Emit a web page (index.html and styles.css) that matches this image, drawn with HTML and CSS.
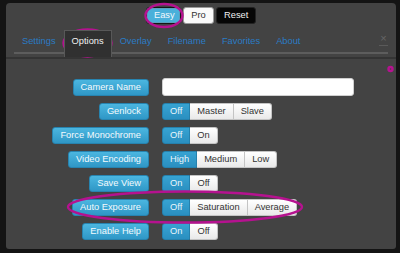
FILE: index.html
```html
<!DOCTYPE html>
<html>
<head>
<meta charset="utf-8">
<link rel="stylesheet" href="styles.css">
</head>
<body>
<div class="panel">
  <div class="modes">
    <span class="mode mode-easy">Easy</span>
    <span class="mode mode-pro">Pro</span>
    <span class="mode mode-reset">Reset</span>
  </div>
  <div class="tabs">
    <span class="tab">Settings</span>
    <span class="tab tab-active">Options</span>
    <span class="tab">Overlay</span>
    <span class="tab">Filename</span>
    <span class="tab">Favorites</span>
    <span class="tab">About</span>
    <span class="close">×</span>
  </div>
  <div class="sep"></div>
  <div class="form">
    <span class="label">Camera Name</span>
    <span class="field"><span class="input"></span></span>

    <span class="label">Genlock</span>
    <span class="seg"><span class="opt on">Off</span><span class="opt">Master</span><span class="opt">Slave</span></span>

    <span class="label">Force Monochrome</span>
    <span class="seg"><span class="opt on">Off</span><span class="opt">On</span></span>

    <span class="label">Video Encoding</span>
    <span class="seg"><span class="opt on">High</span><span class="opt">Medium</span><span class="opt">Low</span></span>

    <span class="label">Save View</span>
    <span class="seg"><span class="opt on">On</span><span class="opt">Off</span></span>

    <span class="label">Auto Exposure</span>
    <span class="seg"><span class="opt on">Off</span><span class="opt">Saturation</span><span class="opt">Average</span></span>

    <span class="label">Enable Help</span>
    <span class="seg"><span class="opt on">On</span><span class="opt">Off</span></span>
  </div>
</div>
<svg class="annot" width="400" height="253" viewBox="0 0 400 253">
  <ellipse cx="164" cy="15.5" rx="18.5" ry="11.5"/>
  <ellipse cx="87.5" cy="43" rx="24" ry="13.5"/>
  <ellipse cx="185" cy="207" rx="117" ry="15.5"/>
  <circle cx="390.5" cy="69" r="2"/>
</svg>
</body>
</html>
```
FILE: styles.css
```css
html, body {
  margin: 0;
  padding: 0;
}
body {
  width: 400px;
  height: 253px;
  overflow: hidden;
  position: relative;
  background: #141414;
  font-family: "Liberation Sans", Arial, sans-serif;
  font-size: 9.3px;
}
.panel {
  margin: 3px 0 0 6px;
  width: 390px;
  height: 246px;
  background: #434343;
  border-radius: 4px 4px 3px 3px;
  box-sizing: border-box;
  display: flex;
  flex-direction: column;
}
.modes {
  display: flex;
  justify-content: center;
  gap: 2px;
  padding-top: 4px;
}
.mode {
  height: 17px;
  box-sizing: border-box;
  line-height: 15px;
  padding: 0 7px;
  border-radius: 3px;
  border: 1px solid transparent;
  text-align: center;
}
.mode-easy {
  width: 35px;
  background: #4ab0da;
  color: #f2f8fc;
  border-color: #161616;
  box-shadow: inset 0 0 0 1px #5aa0bd;
}
.mode-pro {
  width: 31px;
  background: #fafafa;
  color: #333;
  border-color: #9a9a9a;
}
.mode-reset {
  width: 40px;
  background: #060606;
  color: #f0f0f0;
  border-color: #222;
}
.tabs {
  display: flex;
  align-items: flex-start;
  margin: 6px 8px 0;
  border-bottom: 2px solid #5d5d5d;
  position: relative;
}
.tab {
  height: 22px;
  line-height: 22px;
  padding: 0 8px;
  color: #2a7bc4;
  box-sizing: border-box;
}
.tab-active {
  height: 27px;
  margin-bottom: -5px;
  background: #303030;
  color: #f0f0f0;
  border: 1px solid #585858;
  border-bottom: none;
  line-height: 21px;
  padding: 0 7px;
  position: relative;
  z-index: 1;
}
.close {
  margin-left: auto;
  margin-right: 0;
  margin-top: 3px;
  width: 9px;
  text-align: center;
  color: #666;
  font-size: 11px;
  line-height: 11px;
  height: 13px;
  border-bottom: 1px solid #5a5a5a;
  box-sizing: border-box;
}
.sep {
  margin-top: 3px;
  height: 2px;
  background: #343434;
}
.form {
  display: grid;
  grid-template-columns: 143px 1fr;
  column-gap: 13px;
  row-gap: 7px;
  padding-top: 19px;
  align-items: center;
}
.label {
  justify-self: end;
  height: 17px;
  box-sizing: border-box;
  line-height: 15px;
  padding: 0 7px;
  border: 1px solid #2784b0;
  border-radius: 3px;
  background: linear-gradient(#4bb6e0, #2f97c6);
  color: #f4fafd;
  white-space: nowrap;
}
.field {
  display: flex;
}
.input {
  width: 192px;
  height: 18px;
  box-sizing: border-box;
  background: #fff;
  border: 1px solid #cfcfcf;
  border-radius: 3px;
}
.seg {
  display: flex;
  justify-self: start;
}
.opt {
  height: 17px;
  box-sizing: border-box;
  line-height: 15px;
  padding: 0 7px;
  border: 1px solid #c4c4c4;
  border-left: none;
  background: linear-gradient(#ffffff, #e9e9e9);
  color: #333;
  white-space: nowrap;
}
.opt:first-child {
  border-left: 1px solid #c4c4c4;
  border-radius: 3px 0 0 3px;
}
.opt:last-child {
  border-radius: 0 3px 3px 0;
}
.opt.on {
  background: linear-gradient(#37a3d2, #2a8fc0);
  border-color: #2581ad;
  color: #eaf5fb;
}
.annot {
  position: absolute;
  left: 0;
  top: 0;
  fill: none;
  stroke: #b5128f;
  stroke-width: 2.4;
}
```
